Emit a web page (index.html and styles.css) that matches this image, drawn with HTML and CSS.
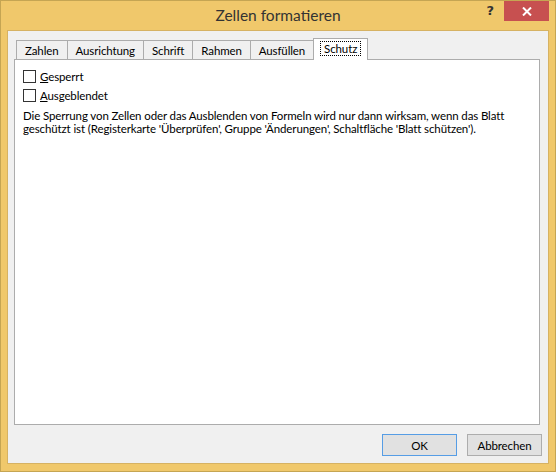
FILE: index.html
```html
<!DOCTYPE html>
<html lang="de">
<head>
    <meta charset="UTF-8">
    <title>Zellen formatieren</title>
    <link rel="stylesheet" href="styles.css">
</head>
<body>
    <div class="window">
        <div class="titlebar">
            <div></div>
            <div class="title">Zellen formatieren</div>
            <div class="caption-btns">
                <span class="help">?</span>
                <span class="close">
                    <svg width="10" height="9" viewBox="0 0 10 9">
                        <path d="M1 0.5 L9 8.5 M9 0.5 L1 8.5" stroke="#fff" stroke-width="2"/>
                    </svg>
                </span>
            </div>
        </div>
        <div class="client">
            <div class="tabs">
                <div class="tab">Zahlen</div>
                <div class="tab">Ausrichtung</div>
                <div class="tab">Schrift</div>
                <div class="tab">Rahmen</div>
                <div class="tab">Ausfüllen</div>
                <div class="tab active"><span class="focus">Schutz</span></div>
            </div>
            <div class="panel">
                <label class="check"><span class="box"></span><span><u>G</u>esperrt</span></label>
                <label class="check"><span class="box"></span><span><u>A</u>usgeblendet</span></label>
                <p class="note">Die Sperrung von Zellen oder das Ausblenden von Formeln wird nur dann wirksam, wenn das Blatt geschützt ist (Registerkarte 'Überprüfen', Gruppe 'Änderungen', Schaltfläche 'Blatt schützen').</p>
            </div>
            <div class="buttons">
                <button class="btn default">OK</button>
                <button class="btn">Abbrechen</button>
            </div>
        </div>
    </div>
</body>
</html>
```

FILE: styles.css
```css
body {
    margin: 0;
    font-family: Lato, sans-serif;
    font-size: 11.5px;
    letter-spacing: -0.12px;
    color: #000;
}
.window {
    width: 554px;
    height: 470px;
    border: 1px solid #c5a553;
    background: #f0c86b;
    display: flex;
    flex-direction: column;
}
.titlebar {
    height: 29px;
    display: grid;
    grid-template-columns: 1fr auto 1fr;
}
.title {
    font-size: 15.5px;
    letter-spacing: 0;
    line-height: 29px;
    color: #333;
}
.caption-btns {
    display: flex;
    justify-content: flex-end;
    align-items: flex-start;
    margin-right: 6px;
}
.help {
    font-family: "DejaVu Sans", sans-serif;
    font-weight: bold;
    font-size: 13px;
    color: #333;
    line-height: 20px;
    margin-right: 10px;
}
.close {
    width: 45px;
    height: 20px;
    background: #c75050;
    display: flex;
    align-items: center;
    justify-content: center;
}
.client {
    flex: 1;
    margin: 0 6px 7px 6px;
    border: 1px solid #d6b263;
    background: #f0f0f0;
    padding: 7px 6px 0 6px;
    display: flex;
    flex-direction: column;
}
.tabs {
    display: flex;
    align-items: flex-end;
    margin-left: 2px;
    position: relative;
    z-index: 1;
}
.tab {
    height: 18px;
    line-height: 19px;
    padding: 0 8px;
    border: 1px solid #acacac;
    border-bottom: none;
    margin-left: -1px;
    background: #f0f0f0;
}
.tab:first-child {
    margin-left: 0;
}
.tab.active {
    height: 21px;
    line-height: 19px;
    background: #fff;
    padding: 0 7px;
    margin-bottom: -1px;
}
.focus {
    outline: 1px dotted #000;
    padding: 0 3px;
}
.panel {
    box-sizing: border-box;
    height: 366px;
    background: #fff;
    border: 1px solid #acacac;
    margin-right: 2px;
    padding: 7px 8px 0 8px;
}
.check {
    display: flex;
    align-items: center;
    gap: 4px;
    height: 19px;
    line-height: 14px;
}
.box {
    width: 11px;
    height: 11px;
    border: 1px solid #333;
    background: #fff;
}
.note {
    margin: 4px 0 0 0;
    line-height: 13px;
}
.buttons {
    display: flex;
    justify-content: flex-end;
    gap: 10px;
    margin-top: 9px;
}
.btn {
    width: 75px;
    height: 22px;
    font-family: inherit;
    font-size: 11.5px;
    letter-spacing: inherit;
    background: #e1e1e1;
    border: 1px solid #adadad;
    padding: 0;
}
.btn.default {
    border-color: #569de5;
}
```
